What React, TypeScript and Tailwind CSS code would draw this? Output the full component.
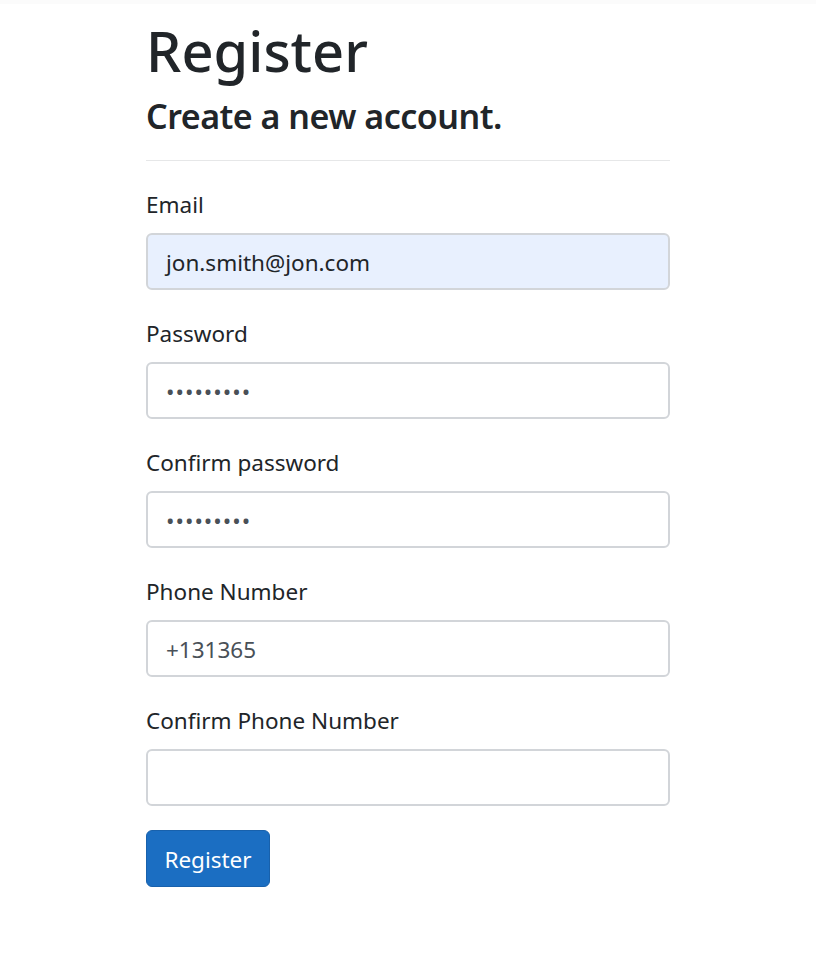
import React from "react"

const fields = [
  { label: "Email", value: "jon.smith@jon.com", type: "email", autofill: true },
  { label: "Password", value: "•••••••••", type: "password" },
  { label: "Confirm password", value: "•••••••••", type: "password" },
  { label: "Phone Number", value: "+131365", type: "tel" },
  { label: "Confirm Phone Number", value: "", type: "tel" },
]

export default function App() {
  return (
    <div className="min-h-screen w-full bg-white font-['Noto_Sans',sans-serif] text-[#212529]">
      <div className="h-[4px] w-full bg-[#fbfbfb]" />
      <main className="ml-[146px] w-[524px]">
        <h1 className="mt-[10px] text-[56px] font-medium leading-[72px]">Register</h1>
        <h2 className="mt-[9px] text-[34px] font-semibold leading-[43px] tracking-[-0.5px]">Create a new account.</h2>
        <hr className="mt-[22px] border-t-[1.5px] border-[#e6e7e8]" />
        <form className="mt-[24px] flex flex-col">
          {fields.map((f) => (
            <div key={f.label} className="mb-[24px] flex flex-col">
              <label className="mb-[10px] pt-[2px] text-[22.5px] leading-[36px]">{f.label}</label>
              <div
                className={`flex h-[57px] items-center rounded-[6px] border-2 border-[#d2d5d9] px-[18px] pt-[3px] text-[22.5px] ${
                  f.autofill ? "bg-[#e8f0fe] text-[#212529]" : "bg-white text-[#495057]"
                } ${f.type === "password" ? "tracking-[1px]" : ""}`}
              >
                {f.value}
              </div>
            </div>
          ))}
          <button
            type="button"
            className="h-[57px] w-[124px] rounded-[6px] border-[1.5px] border-[#1861ac] bg-[#1b6ec2] pt-[2px] text-[22.5px] text-white"
          >
            Register
          </button>
        </form>
      </main>
    </div>
  )
}
